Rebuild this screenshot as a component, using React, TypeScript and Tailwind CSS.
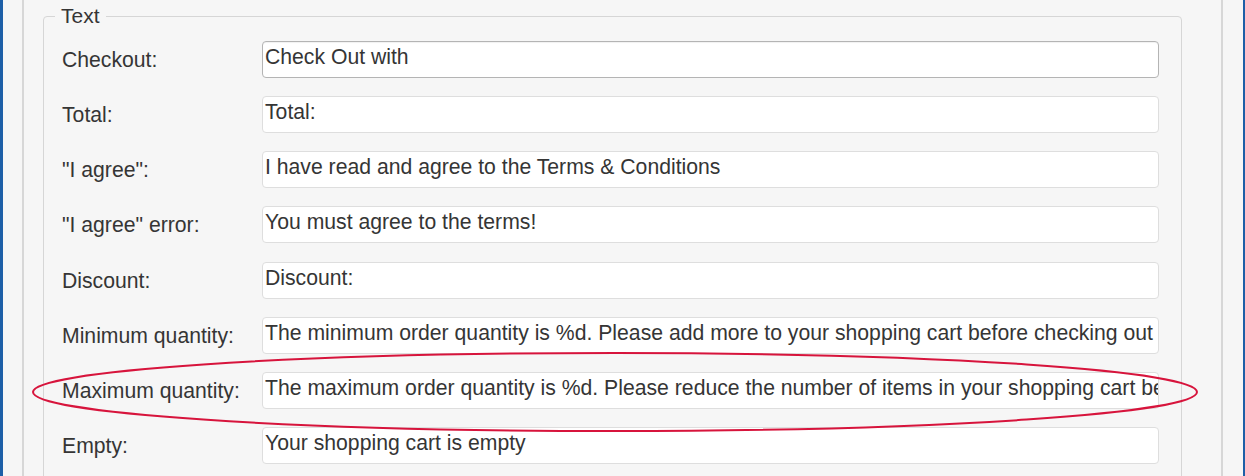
import React from "react";

const rows: { label: string; value: string; focused?: boolean }[] = [
  { label: "Checkout:", value: "Check Out with", focused: true },
  { label: "Total:", value: "Total:" },
  { label: "\"I agree\":", value: "I have read and agree to the Terms & Conditions" },
  { label: "\"I agree\" error:", value: "You must agree to the terms!" },
  { label: "Discount:", value: "Discount:" },
  {
    label: "Minimum quantity:",
    value:
      "The minimum order quantity is %d. Please add more to your shopping cart before checking out",
  },
  {
    label: "Maximum quantity:",
    value:
      "The maximum order quantity is %d. Please reduce the number of items in your shopping cart before checking out",
  },
  { label: "Empty:", value: "Your shopping cart is empty" },
];

export default function App() {
  return (
    <div
      className="relative flex h-[476px] w-full overflow-hidden border-l-[3px] border-r-[2px] border-[#1d5fa7] bg-[#f6f6f6] text-[#353535]"
      style={{ fontFamily: '"Liberation Sans", Arial, sans-serif' }}
    >
      <div className="ml-[19px] mr-[20px] flex min-w-0 flex-1 border-x-2 border-[#d7d7d7] pl-[19px] pr-[39px] pt-[4px]">
        <fieldset className="h-[600px] min-w-0 flex-1 rounded-[4px] border border-[#d6d6d6] pl-[18px] pr-[22px] pt-[13px]">
          <legend className="-ml-[7px] px-[6px] text-[21px] leading-[24px]">Text</legend>
          <div className="flex flex-col gap-[18.15px]">
            {rows.map((r) => (
              <div key={r.label} className="flex items-center">
                <div className="w-[200px] shrink-0 pt-[1px] text-[21.2px] leading-[24px]">{r.label}</div>
                <div
                  className={`h-[37px] min-w-0 flex-1 overflow-hidden whitespace-nowrap rounded-[4px] border bg-white pl-[2px] pt-[3px] text-[21.2px] leading-[24px] ${
                    r.focused ? "border-[#b4b4b4] shadow-[inset_0_1px_1px_rgba(0,0,0,0.06)]" : "border-[#dedede]"
                  }`}
                >
                  {r.value}
                </div>
              </div>
            ))}
          </div>
        </fieldset>
      </div>
      <svg className="pointer-events-none absolute left-[-3px] top-0" width="1245" height="476">
        <ellipse cx="615" cy="392" rx="582" ry="39" fill="none" stroke="#d7143c" strokeWidth="2" />
      </svg>
    </div>
  );
}
